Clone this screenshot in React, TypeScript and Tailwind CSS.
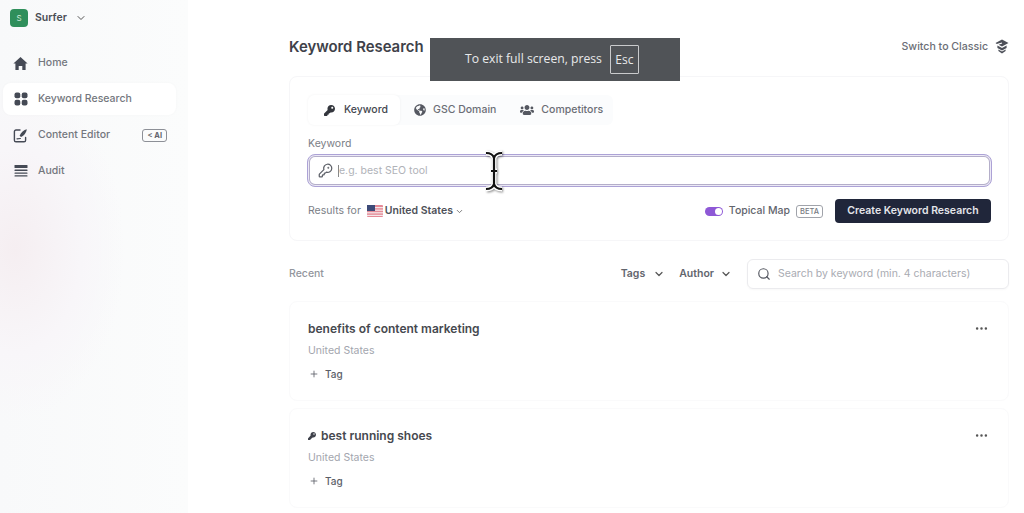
import { ChevronDown, KeyRound, Plus, Search, MoreHorizontal } from "lucide-react";
import { FaKey, FaUsers, FaGlobeAmericas } from "react-icons/fa";

const HomeIcon = () => (
  <svg width="15" height="15" viewBox="0 0 15 15" fill="#454a55">
    <path d="M7.500 1 14.600 7.600H12.600V14H9.300V10H5.700V14H2.400V7.600H0.400Z" />
  </svg>
);

const GridIcon = () => (
  <svg width="14" height="14" viewBox="0 0 14 14" fill="#454a55">
    <rect x="0.5" y="0.5" width="5.8" height="5.8" rx="2" />
    <rect x="7.7" y="0.5" width="5.8" height="5.8" rx="2" />
    <rect x="0.5" y="7.7" width="5.8" height="5.8" rx="2" />
    <rect x="7.7" y="7.7" width="5.8" height="5.8" rx="2" />
  </svg>
);

const EditorIcon = () => (
  <svg width="15" height="15" viewBox="0 0 15 15" fill="none">
    <path d="M7 2H3a1.6 1.6 0 0 0-1.6 1.6v8.6A1.6 1.6 0 0 0 3 13.8h8a1.6 1.6 0 0 0 1.6-1.6V9.5" stroke="#454a55" strokeWidth="1.4" strokeLinecap="round" />
    <path d="M13.8 1.2c-2.8.6-6 3.2-7.2 6.6l1.4 1.2c3-1.2 5.4-4.6 5.8-7.8Z" fill="#454a55" />
    <path d="M4 10.8c1-.2 2-.3 3.4-.3" stroke="#454a55" strokeWidth="1.2" strokeLinecap="round" />
  </svg>
);

const AuditIcon = () => (
  <svg width="14" height="14" viewBox="0 0 14 14" fill="#454a55">
    <rect x="0.5" y="1" width="13" height="3" rx="0.6" />
    <rect x="0.5" y="5.6" width="13" height="1.4" rx="0.5" />
    <rect x="0.5" y="8.4" width="13" height="1.4" rx="0.5" />
    <rect x="0.5" y="11.2" width="13" height="1.4" rx="0.5" />
  </svg>
);

const CapIcon = () => (
  <svg width="14" height="15" viewBox="0 0 14 15" fill="#4d5059">
    <path d="M7 0.500 13.500 4 7 7.500 3.600 5.700 7.200 4.600 6.800 3.600 1.800 4.900 0.500 4Z" />
    <path d="M2.400 6.600 7 9l4.600-2.400v2.500L7 11.500 2.400 9.100Z" />
    <path d="M3.400 10.600 7 12.500l3.600-1.900v1.500L7 14.500l-3.600-2.400Z" />
  </svg>
);

const Flag = () => (
  <svg width="16" height="12" viewBox="0 0 16 12">
    <rect width="16" height="12" rx="1" fill="#e58a97" />
    <rect y="2" width="16" height="1.2" fill="#f5e6e8" />
    <rect y="4.6" width="16" height="1.2" fill="#f5e6e8" />
    <rect y="7.2" width="16" height="1.2" fill="#f5e6e8" />
    <rect y="9.8" width="16" height="1.2" fill="#f5e6e8" />
    <rect width="8" height="6" fill="#3c4a78" />
  </svg>
);

const IBeam = () => (
  <svg width="22" height="42" viewBox="0 0 22 42" fill="none" className="drop-shadow-[1px_1px_1px_rgba(0,0,0,0.45)]">
    <path d="M3 3c4 0 7 1.500 8 5 1-3.500 4-5 8-5M11 8v26M3 39c4 0 7-1.500 8-5 1 3.500 4 5 8 5M8 21h6" stroke="#fff" strokeWidth="4.800" />
    <path d="M3 3c4 0 7 1.500 8 5 1-3.500 4-5 8-5M11 8v26M3 39c4 0 7-1.500 8-5 1 3.500 4 5 8 5M8 21h6" stroke="#111" strokeWidth="2.200" />
  </svg>
);

const navItems = [
  { label: "Home", icon: <HomeIcon /> },
  { label: "Keyword Research", icon: <GridIcon />, active: true },
  { label: "Content Editor", icon: <EditorIcon />, ai: true },
  { label: "Audit", icon: <AuditIcon /> },
];

function RecentCard({ title, pinned }: { title: string; pinned?: boolean }) {
  return (
    <div className="relative h-[100px] rounded-lg border border-[#fafafb] bg-white pl-[18px] pt-[18px]">
      <div className="flex h-[18px] items-center gap-[5px] text-[12px] font-semibold text-[#46494f]">
        {pinned && <FaKey size={8} color="#3f424b" />}
        {title}
      </div>
      <div className="mt-[5px] text-[10.5px] leading-[16px] text-[#a3a6ae]">United States</div>
      <div className="mt-[7px] flex h-[16px] items-center gap-[6px] pl-[1px] text-[10px] font-medium text-[#5b5e67]">
        <Plus size={10} />
        Tag
      </div>
      <MoreHorizontal size={15} color="#555" className="absolute right-[19px] top-[19px]" />
    </div>
  );
}

export default function App() {
  return (
    <div className="relative flex h-[513px] w-[1024px] overflow-hidden bg-white font-['Inter',sans-serif]">
      {/* Sidebar */}
      <aside className="h-full w-[188px] shrink-0 bg-[radial-gradient(ellipse_110px_170px_at_15px_250px,#f5eef1_0%,#f8f6f9_60%,transparent_100%),linear-gradient(to_right,#f8f9fa,#fbfcfc)] pt-[9px]">
        <div className="flex items-center gap-[7px] pl-[10px]">
          <div className="flex h-[18px] w-[18px] items-center justify-center rounded-[4px] bg-[#2f8f5b] text-[8px] text-[#cfe9d9]">S</div>
          <span className="text-[10.5px] font-semibold text-[#4a4d55]">Surfer</span>
          <ChevronDown size={12} color="#555" className="ml-[1px]" />
        </div>
        <nav className="mt-[20px] flex flex-col gap-[4px] pl-[3px] pr-[12px]">
          {navItems.map((item) => (
            <div
              key={item.label}
              className={`flex h-[32px] items-center rounded-lg pl-[9px] pr-[9px] text-[10.5px] font-medium text-[#74777e] ${item.active ? "bg-white shadow-[0_0_3px_rgba(0,0,0,0.03)]" : ""}`}
            >
              <span className="flex w-[17px] justify-center">{item.icon}</span>
              <span className="ml-[9px] flex-1">{item.label}</span>
              {item.ai && (
                <span className="rounded-[3px] border border-[#8d9097] px-[4px] text-[7.5px] font-bold leading-[11px] text-[#62656d]">{"<"} AI</span>
              )}
            </div>
          ))}
        </nav>
      </aside>

      {/* Main */}
      <main className="h-full flex-1 bg-white pl-[101px] pr-[15px] pt-[38px]">
        <div className="flex h-[18px] items-center justify-between">
          <h1 className="text-[14.9px] font-semibold text-[#3e4149]">Keyword Research</h1>
          <div className="flex items-center gap-[7px] text-[10.6px] font-medium text-[#6b6e76]">
            Switch to Classic
            <CapIcon />
          </div>
        </div>

        <section className="mt-[20px] h-[165px] rounded-lg border border-[#f6f6f8] pl-[18px] pr-[17px] pt-[18px]">
          <div className="flex h-[30px] w-[305px] items-center rounded-md bg-[#fbfcfd] text-[10.5px] font-medium text-[#6b6e76]">
            <div className="flex h-full items-center gap-[9px] rounded-md bg-white pl-[16px] pr-[12px] text-[#44474f] shadow-[0_0_3px_rgba(0,0,0,0.05)]">
              <FaKey size={11} color="#33363d" />
              Keyword
            </div>
            <div className="ml-[14px] flex items-center gap-[7px]">
              <FaGlobeAmericas size={12} color="#555861" />
              GSC Domain
            </div>
            <div className="ml-[24px] flex items-center gap-[7px]">
              <FaUsers size={14} color="#555861" />
              Competitors
            </div>
          </div>

          <div className="mt-[11px] text-[10.5px] leading-[16px] text-[#7b7e86]">Keyword</div>
          <div className="-mx-[1px] mt-[2px] flex h-[33px] items-center rounded-lg border border-[#aca2d6] bg-white pl-[10px] shadow-[inset_0_0_0_1px_#ece9f6,inset_0_0_0_2px_#b4aec9]">
            <KeyRound size={15} color="#5d6068" />
            <span className="ml-[5px] h-[12px] w-px bg-[#888]" />
            <span className="pt-[1px] text-[10.5px] text-[#b0b2b8]">e.g. best SEO tool</span>
          </div>

          <div className="mt-[12px] flex items-center">
            <span className="text-[10.5px] text-[#7b7e86]">Results for</span>
            <span className="ml-[6px]"><Flag /></span>
            <span className="ml-[2px] text-[10.5px] font-semibold text-[#4e5159]">United States</span>
            <ChevronDown size={9} color="#555" className="ml-[2px]" />
            <div className="ml-auto flex items-center">
              <span className="relative h-[9px] w-[18px] rounded-full bg-[#8e58d6]">
                <span className="absolute right-[1px] top-[1px] h-[7px] w-[7px] rounded-full bg-white" />
              </span>
              <span className="ml-[6px] text-[10.5px] font-medium text-[#62656d]">Topical Map</span>
              <span className="ml-[6px] rounded-[3px] border border-[#a0a3aa] px-[3px] text-[7.5px] font-medium leading-[11px] text-[#777a82]">BETA</span>
              <button className="ml-[12px] h-[24px] w-[156px] rounded-[4px] bg-[#20263a] text-[10.5px] font-semibold text-[#e4e5ea]">
                Create Keyword Research
              </button>
            </div>
          </div>
        </section>

        <div className="mt-[18px] flex h-[30px] items-center">
          <span className="text-[10.5px] font-medium text-[#93969d]">Recent</span>
          <div className="ml-auto flex items-center text-[10.5px] font-semibold text-[#62656d]">
            Tags
            <ChevronDown size={12} strokeWidth={2.4} color="#555" className="ml-[8px]" />
            <span className="ml-[14px]">Author</span>
            <ChevronDown size={12} strokeWidth={2.4} color="#555" className="ml-[6px]" />
          </div>
          <div className="ml-[15px] flex h-[30px] w-[262px] items-center gap-[7px] rounded-md border border-[#ebebee] pl-[9px] text-[10.5px] text-[#a9abb2] shadow-[0_1px_2px_rgba(0,0,0,0.03)]">
            <Search size={14} color="#555861" />
            Search by keyword (min. 4 characters)
          </div>
        </div>

        <div className="mt-[12px] flex flex-col gap-[7px]">
          <RecentCard title="benefits of content marketing" />
          <RecentCard title="best running shoes" pinned />
        </div>
      </main>

      {/* Fullscreen notice */}
      <div className="absolute left-[430px] top-[38px] flex h-[43px] w-[250px] items-center gap-[8px] bg-[#505357] pl-[35px] font-['Open_Sans',sans-serif] text-[12.2px] text-[#e8e9ea]">
        To exit full screen, press
        <span className="flex h-[29px] w-[29px] items-center justify-center rounded-[1px] border border-[#c9cacc] text-[12px]">Esc</span>
      </div>

      {/* Mouse cursor */}
      <div className="absolute left-[483px] top-[150px]">
        <IBeam />
      </div>
    </div>
  );
}
